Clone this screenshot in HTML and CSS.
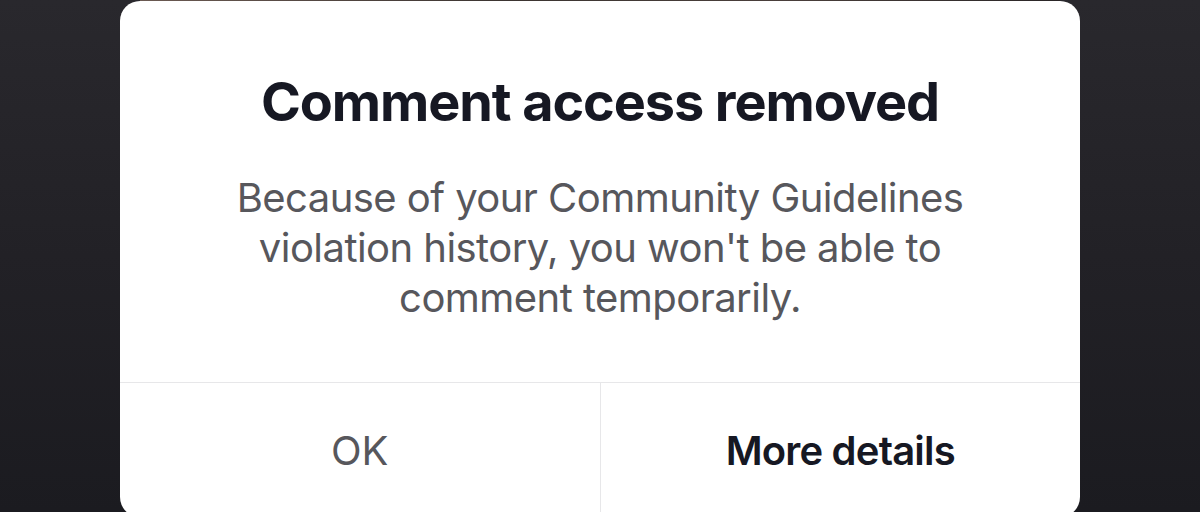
FILE: index.html
```html
<!DOCTYPE html>
<html lang="en">
<head>
<meta charset="utf-8">
<title>Comment access removed</title>
<link rel="stylesheet" href="styles.css">
</head>
<body>
<div class="page">
  <div class="topstrip"></div>
  <div class="dialog" role="dialog" aria-labelledby="dlg-title">
    <div class="dialog-body">
      <h1 class="title" id="dlg-title">Comment access removed</h1>
      <p class="message">Because of your Community Guidelines<br>violation history, you won't be able to<br>comment temporarily.</p>
    </div>
    <div class="actions">
      <button class="action action-secondary" type="button">OK</button>
      <button class="action action-primary" type="button">More details</button>
    </div>
  </div>
</div>
</body>
</html>
```
FILE: styles.css
```css
* { box-sizing: border-box; }

html, body {
  margin: 0;
  padding: 0;
}

body {
  font-family: Inter, "Noto Sans", "Liberation Sans", sans-serif;
  background: #1d1d22;
}

.page {
  width: 1200px;
  height: 512px;
  overflow: hidden;
  background: linear-gradient(180deg, #29282d 0%, #222126 50%, #1b1b20 100%);
}

.topstrip {
  width: 920px;
  height: 1px;
  margin: 0 auto;
  background: linear-gradient(90deg, #6b5a52, #3b3431 40%, #4a3f3b 70%, #2a2627);
}

.dialog {
  width: 960px;
  margin: 0 auto;
  background: #ffffff;
  border-radius: 20px;
}

.dialog-body {
  padding: 69px 40px 59px;
  text-align: center;
}

.title {
  margin: 0;
  font-size: 54px;
  line-height: 64px;
  font-weight: 700;
  color: #161823;
  letter-spacing: -1.1px;
}

.message {
  margin: 39px 0 0;
  font-size: 40px;
  line-height: 50px;
  font-weight: 400;
  color: #57575c;
  letter-spacing: -0.55px;
}

.actions {
  display: flex;
  border-top: 1px solid #e7e7e9;
}

.action {
  flex: 1;
  height: 134px;
  display: flex;
  align-items: center;
  justify-content: center;
  border: 0;
  background: transparent;
  font-family: inherit;
  font-size: 40px;
  padding: 0;
}

.action + .action {
  border-left: 1px solid #e7e7e9;
}

.action-secondary {
  color: #57575c;
  font-weight: 400;
}

.action-primary {
  color: #161823;
  font-weight: 600;
  letter-spacing: -0.8px;
}
```
